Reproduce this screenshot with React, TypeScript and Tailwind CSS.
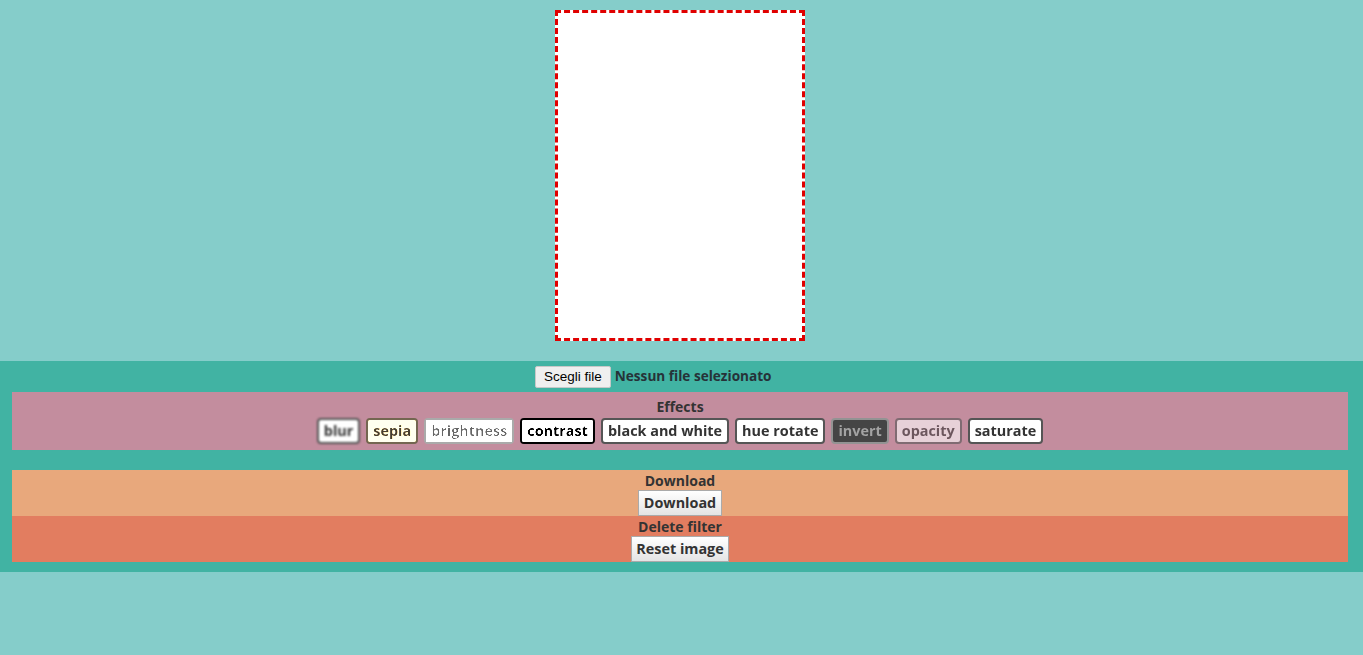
const FILTERS = [
  { label: "blur", cls: "blur-[1.2px]" },
  { label: "sepia", cls: "sepia" },
  { label: "brightness", cls: "brightness-200" },
  { label: "contrast", cls: "contrast-[3]" },
  { label: "black and white", cls: "grayscale" },
  { label: "hue rotate", cls: "hue-rotate-90" },
  { label: "invert", cls: "invert-[.73]" },
  { label: "opacity", cls: "opacity-60" },
  { label: "saturate", cls: "saturate-200" },
];

const font = "font-['Open_Sans','Lato',sans-serif]";

export default function App() {
  return (
    <div className={`min-h-[655px] bg-[#85cdca] ${font} text-[#333]`}>
      {/* Preview */}
      <div className="flex w-[1360px] justify-center pt-[10px] pb-[20px]">
        <div className="w-[250px] h-[331px] bg-white border-[3px] border-dashed border-[#e00000]" />
      </div>

      {/* Controls */}
      <div className="bg-[#41b3a3]">
        <div className="w-[1360px] px-[12px] pb-[10px]">
          <div className="flex h-[31px] items-center pl-[523px]">
            <button className="h-[22px] rounded-[2px] border border-[#c8c8c8] bg-[#efefef] px-[8px] font-['Liberation_Sans',Arial,sans-serif] text-[13.5px] text-black">
              Scegli file
            </button>
            <span className="ml-[4px] text-[13.6px] font-bold text-[#263238]">
              Nessun file selezionato
            </span>
          </div>

          <div className="flex h-[58px] flex-col items-center bg-[#c38d9e] pt-[6px]">
            <p className="text-[14px] font-bold leading-[18px]">Effects</p>
            <div className="mt-[2px] flex gap-[6px]">
              {FILTERS.map((f) => (
                <button
                  key={f.label}
                  className={`h-[26px] rounded-[4px] border-2 border-[#555] bg-white px-[5px] text-[14.4px] font-bold leading-none text-[#333] ${f.cls}`}
                >
                  {f.label}
                </button>
              ))}
            </div>
          </div>

          <div className="h-[20px]" />

          <div className="flex h-[46px] flex-col items-center bg-[#e8a87c]">
            <p className="h-[20px] pt-[1px] text-[14px] font-bold leading-[20px]">Download</p>
            <button className="h-[26px] border border-[#aaa] bg-gradient-to-b from-white to-[#e4e4e4] px-[5px] text-[14.4px] font-bold text-[#333]">
              Download
            </button>
          </div>

          <div className="flex h-[46px] flex-col items-center bg-[#e27d60]">
            <p className="h-[20px] pt-[1px] text-[14px] font-bold leading-[20px]">Delete filter</p>
            <button className="h-[26px] border border-[#aaa] bg-gradient-to-b from-white to-[#e4e4e4] px-[4px] text-[14.4px] font-bold text-[#333]">
              Reset image
            </button>
          </div>
        </div>
      </div>
    </div>
  );
}
